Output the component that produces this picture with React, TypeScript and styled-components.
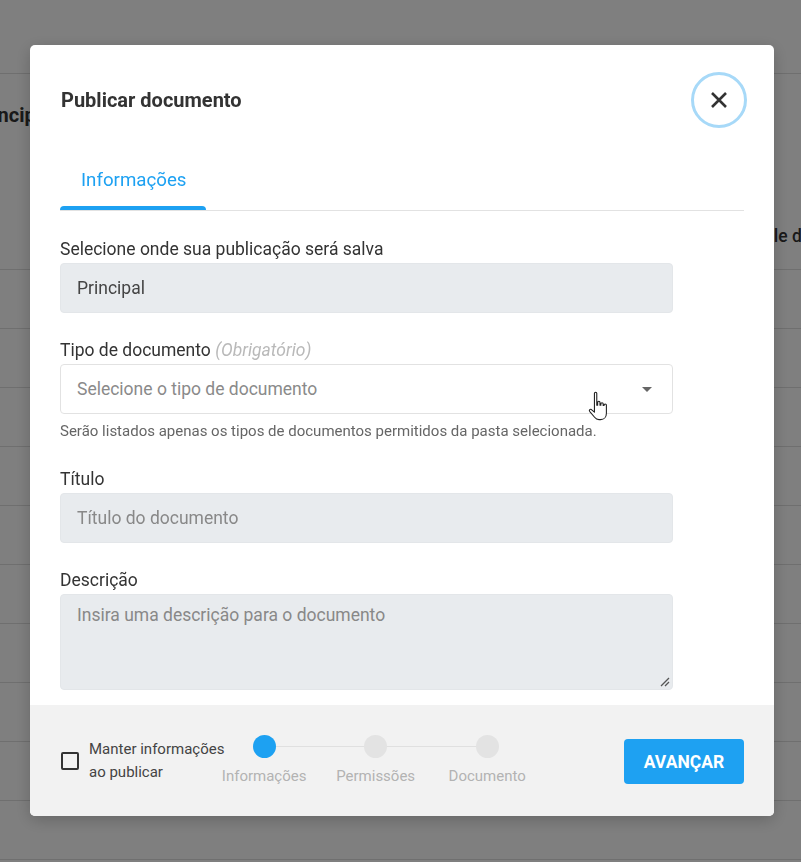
import React from "react";
import styled, { createGlobalStyle } from "styled-components";

const Global = createGlobalStyle`
  html, body { margin: 0; padding: 0; }
  body { font-family: Roboto, "Liberation Sans", Arial, sans-serif; background: #fff; overflow: hidden; }
  * { box-sizing: border-box; }
`;

const Page = styled.div`
  width: 801px;
  height: 862px;
  background: #fff;
  overflow: hidden;
`;

const TopBar = styled.div`
  height: 74px;
  border-bottom: 1px solid #dedede;
`;

const SectionTitle = styled.div`
  height: 82px;
  display: flex;
  align-items: center;
  margin-left: -28px;
  font-size: 20px;
  font-weight: 700;
  color: #333;
  white-space: nowrap;
`;

const TableHead = styled.div`
  height: 114px;
  display: flex;
  align-items: flex-end;
  padding: 0 0 23px 721px;
  font-size: 17.5px;
  font-weight: 500;
  color: #333;
  white-space: nowrap;
  border-bottom: 1px solid #dedede;
`;

const TableRow = styled.div`
  height: 59px;
  border-bottom: 1px solid #dedede;
`;

const Overlay = styled.div`
  position: fixed;
  inset: 0;
  background: rgba(0, 0, 0, 0.5);
  padding: 45px 0 0 30px;
`;

const Modal = styled.div`
  width: 744px;
  height: 771px;
  background: #fff;
  border-radius: 5px;
  overflow: hidden;
  display: flex;
  flex-direction: column;
  box-shadow: 0 4px 16px rgba(0, 0, 0, 0.2);
`;

const Body = styled.div`
  flex: 1;
  padding: 27px 30px 0 30px;
  overflow: hidden;
`;

const Header = styled.div`
  display: flex;
  align-items: center;
  justify-content: space-between;
  height: 56px;
  margin-right: -3px;
`;

const Title = styled.h2`
  margin: 0 0 0 1px;
  font-size: 20px;
  font-weight: 700;
  color: #333;
`;

const CloseButton = styled.button`
  width: 56px;
  height: 56px;
  border-radius: 50%;
  border: 3px solid #a7d9f8;
  background: #fff;
  display: flex;
  align-items: center;
  justify-content: center;
  padding: 0;
  cursor: pointer;
`;

const Tabs = styled.div`
  margin-top: 22px;
  display: flex;
  border-bottom: 1px solid #e2e2e2;
`;

const Tab = styled.div<{ $active?: boolean }>`
  position: relative;
  height: 60px;
  padding: 0 20px 0 21px;
  display: flex;
  align-items: center;
  font-size: 18.7px;
  color: ${(p) => (p.$active ? "#1da1f2" : "#888")};
  &::after {
    content: "";
    display: ${(p) => (p.$active ? "block" : "none")};
    position: absolute;
    left: 0;
    right: 0;
    bottom: 0;
    height: 4px;
    background: #1da1f2;
    border-radius: 4px 4px 0 0;
  }
`;

const Form = styled.div`
  padding-top: 28px;
  width: 613px;
  display: flex;
  flex-direction: column;
  gap: 27px;
`;

const Field = styled.div`
  display: flex;
  flex-direction: column;
`;

const Label = styled.label`
  font-size: 17.5px;
  line-height: 20px;
  color: #333;
  margin-bottom: 4px;
  white-space: nowrap;
`;

const Optional = styled.span`
  font-style: italic;
  color: #b9b9b9;
`;

const Input = styled.div<{ $filled?: boolean }>`
  height: 50px;
  border-radius: 4px;
  background: #e8ebee;
  border: 1px solid #e3e6e9;
  display: flex;
  align-items: center;
  padding: 0 16px;
  font-size: 17.5px;
  color: ${(p) => (p.$filled ? "#444" : "#888")};
`;

const Select = styled.div`
  position: relative;
  height: 50px;
  border-radius: 4px;
  background: #fff;
  border: 1px solid #e2e2e2;
  display: flex;
  align-items: center;
  justify-content: space-between;
  padding: 0 20px 0 16px;
  font-size: 17.5px;
  color: #8a8a8a;
`;

const Caret = styled.span`
  width: 0;
  height: 0;
  border-left: 5px solid transparent;
  border-right: 5px solid transparent;
  border-top: 5px solid #666;
`;

const Cursor = styled.svg`
  position: absolute;
  left: 525px;
  top: 25px;
`;

const Hint = styled.div`
  margin: 8px 0 2px;
  font-size: 15px;
  line-height: 18px;
  color: #666;
  white-space: nowrap;
`;

const TextArea = styled.div`
  position: relative;
  height: 96px;
  border-radius: 4px;
  background: #e8ebee;
  border: 1px solid #e3e6e9;
  padding: 9px 16px;
  font-size: 17.5px;
  line-height: 22px;
  color: #888;
`;

const Grip = styled.svg`
  position: absolute;
  right: 2px;
  bottom: 2px;
`;

const Footer = styled.div`
  height: 111px;
  background: #f2f2f2;
  display: flex;
  align-items: center;
  padding: 0 30px 0 31px;
`;

const Keep = styled.label`
  display: flex;
  align-items: center;
  gap: 10px;
  margin-right: -16px;
`;

const Box = styled.span`
  width: 18px;
  height: 18px;
  border: 2px solid #333;
  border-radius: 2px;
  flex: none;
`;

const KeepText = styled.span`
  font-size: 15px;
  line-height: 23px;
  color: #444;
  white-space: nowrap;
`;

const Stepper = styled.div`
  display: flex;
  align-self: flex-start;
  margin-top: 30px;
`;

const Step = styled.div<{ $first?: boolean; $last?: boolean }>`
  position: relative;
  width: 111.5px;
  display: flex;
  flex-direction: column;
  align-items: center;
  &::before {
    content: "";
    position: absolute;
    top: 11px;
    height: 1px;
    background: #e0e0e0;
    left: ${(p) => (p.$first ? "50%" : "0")};
    right: ${(p) => (p.$last ? "50%" : "0")};
  }
`;

const Dot = styled.span<{ $active?: boolean }>`
  position: relative;
  width: 23px;
  height: 23px;
  border-radius: 50%;
  background: ${(p) => (p.$active ? "#1da1f2" : "#e3e3e3")};
`;

const StepLabel = styled.span`
  margin-top: 9px;
  font-size: 15px;
  line-height: 18px;
  color: #b3b3b3;
  white-space: nowrap;
`;

const Spacer = styled.div`
  flex: 1;
`;

const Primary = styled.button`
  width: 120px;
  height: 45px;
  border: none;
  border-radius: 4px;
  background: #1ea1f2;
  color: #fff;
  font-family: Roboto, "Liberation Sans", Arial, sans-serif;
  font-size: 17.5px;
  font-weight: 700;
  margin-top: 2px;
  padding: 0;
  cursor: pointer;
`;

const steps = ["Informações", "Permissões", "Documento"];

export default function App() {
  return (
    <>
      <Global />
      <Page>
        <TopBar />
        <SectionTitle>Principal</SectionTitle>
        <TableHead>Controle de documentos</TableHead>
        {Array.from({ length: 10 }).map((_, i) => (
          <TableRow key={i} />
        ))}
      </Page>
      <Overlay>
        <Modal>
          <Body>
            <Header>
              <Title>Publicar documento</Title>
              <CloseButton aria-label="Fechar">
                <svg width="18" height="18" viewBox="0 0 18 18">
                  <path d="M2 2 L16 16 M16 2 L2 16" stroke="#333" strokeWidth="2.6" strokeLinecap="butt" />
                </svg>
              </CloseButton>
            </Header>
            <Tabs>
              <Tab $active>Informações</Tab>
            </Tabs>
            <Form>
              <Field>
                <Label>Selecione onde sua publicação será salva</Label>
                <Input $filled>Principal</Input>
              </Field>
              <Field>
                <Label>
                  Tipo de documento <Optional>(Obrigatório)</Optional>
                </Label>
                <Select>
                  Selecione o tipo de documento
                  <Caret />
                  <Cursor width="30" height="35" viewBox="0 0 20 24">
                    <path
                      d="M5.5 2.2c0-.9 1.6-.9 1.6 0v8.3h.6V8.4c0-.9 1.6-.9 1.6 0v2.1h.6V9.4c0-.9 1.6-.9 1.6 0v1.2h.6v-.3c0-.9 1.6-.9 1.6 0v5.6c0 2.5-1.5 4.4-4 4.4H8.6c-1.3 0-2.2-.6-3-1.6L2.2 14.6c-.6-.8.4-1.8 1.2-1.2l2.1 1.8z"
                      fill="#fff"
                      stroke="#222"
                      strokeWidth="0.75"
                      strokeLinejoin="round"
                    />
                  </Cursor>
                </Select>
                <Hint>Serão listados apenas os tipos de documentos permitidos da pasta selecionada.</Hint>
              </Field>
              <Field>
                <Label>Título</Label>
                <Input>Título do documento</Input>
              </Field>
              <Field>
                <Label>Descrição</Label>
                <TextArea>
                  Insira uma descrição para o documento
                  <Grip width="10" height="10" viewBox="0 0 10 10">
                    <path d="M1 9 L9 1 M5 9 L9 5" stroke="#555" strokeWidth="1.3" />
                  </Grip>
                </TextArea>
              </Field>
            </Form>
          </Body>
          <Footer>
            <Keep>
              <Box />
              <KeepText>
                Manter informações
                <br />
                ao publicar
              </KeepText>
            </Keep>
            <Stepper>
              {steps.map((s, i) => (
                <Step key={s} $first={i === 0} $last={i === steps.length - 1}>
                  <Dot $active={i === 0} />
                  <StepLabel>{s}</StepLabel>
                </Step>
              ))}
            </Stepper>
            <Spacer />
            <Primary>AVANÇAR</Primary>
          </Footer>
        </Modal>
      </Overlay>
    </>
  );
}
